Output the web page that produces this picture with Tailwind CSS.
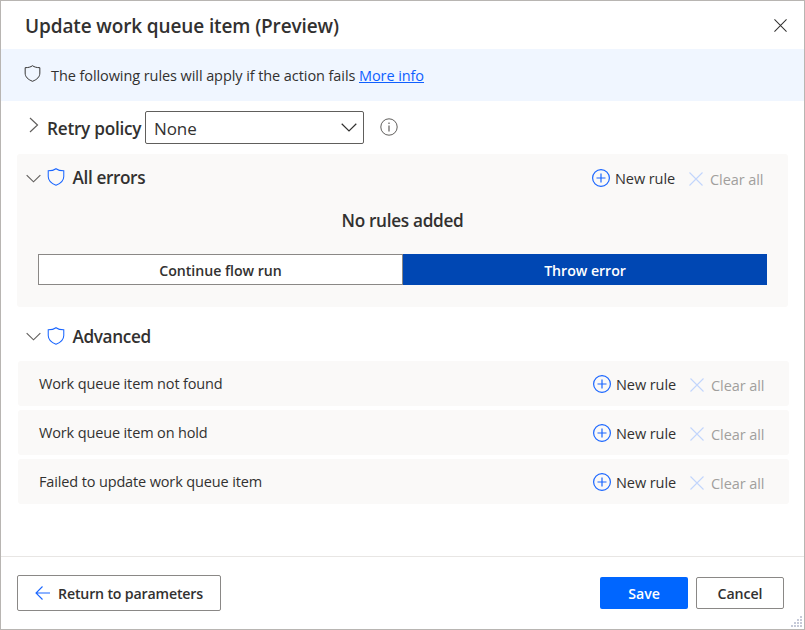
<!DOCTYPE html>
<html lang="en">
<head>
<meta charset="utf-8">
<title>Update work queue item (Preview)</title>
<script src="https://cdn.jsdelivr.net/npm/@tailwindcss/browser@4"></script>
</head>
<body class="overflow-hidden">
<svg class="hidden">
  <symbol id="shield" viewBox="0 0 18 19"><path d="M9 .8C11 2.300 13.800 3 17.200 3v6c0 4.200-3 7.200-8.200 9.200C3.800 16.200.8 13.200.8 9V3C4.200 3 7 2.300 9 .8Z" fill="none" stroke="currentColor" stroke-width="1.100"/></symbol>
  <symbol id="down" viewBox="0 0 16 9"><path d="M.7.8 8 8 15.300.8" fill="none" stroke="currentColor" stroke-width="1.200"/></symbol>
  <symbol id="plus" viewBox="0 0 18 18"><circle cx="9" cy="9" r="8.400" fill="none" stroke="currentColor" stroke-width="1.200"/><path d="M9 4.500v9M4.500 9h9" fill="none" stroke="currentColor" stroke-width="1.200"/></symbol>
  <symbol id="cross" viewBox="0 0 14 14"><path d="m.5.5 13 13M13.500.5l-13 13" fill="none" stroke="currentColor" stroke-width="1.100"/></symbol>
</svg>
<div class="w-[805px] h-[630px] flex flex-col bg-white border border-[#b8b5b2] relative font-['Open_Sans','Noto_Sans',sans-serif] text-[#323130] text-[14.5px] tracking-[-0.08px] leading-5 whitespace-nowrap">
  <header class="h-12 flex items-center justify-between pl-6 pr-[17px] pt-0.5">
    <h1 class="text-[19px] tracking-[-0.12px] leading-6 font-semibold">Update work queue item (Preview)</h1>
    <svg class="w-[13px] h-[13px] mb-px"><use href="#cross"/></svg>
  </header>
  <div class="h-[52px] bg-[#f0f6ff] flex items-center pl-[23px]">
    <svg class="w-[17px] h-[17px] mr-[10px] mb-[3px]"><use href="#shield"/></svg>
    <p class="pt-px">The following rules will apply if the action fails <a class="text-[#0f5fff] underline">More info</a></p>
  </div>
  <main class="grow pl-4 pt-[10px]">
    <div class="h-[33px] flex items-center">
      <svg class="w-[10px] h-4 ml-3 mr-2 mb-1.5" viewBox="0 0 10 16"><path d="M1 1l7.500 7L1 15" fill="none" stroke="#605e5c" stroke-width="1.200"/></svg>
      <div class="w-[98px] text-[17.2px] tracking-[-0.25px] font-semibold pt-0.5">Retry policy</div>
      <div class="w-[219px] h-[33px] border border-[#605e5c] rounded-[2px] flex items-center justify-between pl-2 pr-[6px] text-[17px]"><span class="pt-0.5">None</span><svg class="w-4 h-[9px]"><use href="#down"/></svg></div>
      <svg class="w-[18px] h-[18px] ml-4 mb-0.5" viewBox="0 0 18 18" fill="none" stroke="#605e5c"><circle cx="9" cy="9" r="8.200"/><path d="M9 7.500v6M9 4.500v1.500" stroke-width="1.200"/></svg>
    </div>
    <section class="mt-[10px] w-[771px] h-[153px] rounded-[3px] bg-[#faf9f8]">
      <div class="h-12 flex items-center pl-[9px]">
        <svg class="w-[15px] h-[9px] mr-[6px] text-[#605e5c]"><use href="#down"/></svg>
        <svg class="w-[18px] h-[18px] mr-[7.500px] mb-0.5 text-[#1a66ff]"><use href="#shield"/></svg>
        <div class="text-[17.2px] tracking-[-0.38px] font-semibold w-[519.500px]">All errors</div>
        <svg class="w-[18px] h-[18px] mr-[5px] text-[#1a66ff]"><use href="#plus"/></svg>
        <div class="w-[74px] pt-px">New rule</div>
        <svg class="w-[14px] h-[14px] mr-[7px] mt-0.5 text-[#c2d5fc]"><use href="#cross"/></svg>
        <div class="pt-[3px] text-[#a19f9d]">Clear all</div>
      </div>
      <div class="text-center text-[17.2px] tracking-[-0.3px] leading-6 font-semibold pt-[7px]">No rules added</div>
      <div class="mt-[21px] mx-[21px] h-[31px] flex font-semibold text-center text-[14.2px] tracking-[-0.05px]">
        <div class="w-[365px] bg-white border border-[#8a8886] leading-[31px]">Continue flow run</div>
        <div class="grow bg-[#0047b3] text-white leading-[33px]">Throw error</div>
      </div>
    </section>
    <div class="h-[54px] flex items-center pl-[9px] pt-1">
      <svg class="w-[15px] h-[9px] mr-[6px] text-[#605e5c]"><use href="#down"/></svg>
      <svg class="w-[18px] h-[18px] mr-[7.500px] text-[#1a66ff]"><use href="#shield"/></svg>
      <div class="text-[17.2px] tracking-[-0.38px] font-semibold pt-px">Advanced</div>
    </div>
    <div class="grid gap-1 w-[771px] ml-px" id="rows"></div>
  </main>
  <footer class="h-[73px] border-t border-[#e8e6e4] flex items-center pl-4 pr-5 font-semibold text-[14.2px]">
    <button class="w-[204px] h-9 border border-[#8a8886] rounded-[2px] flex items-center pl-[17px] mr-auto tracking-[-0.18px]"><svg class="w-[15px] h-[14px] mr-2" viewBox="0 0 15 14"><path d="M15 7H.8M7.500.5 1 7l6.500 6.500" fill="none" stroke="#1a66ff" stroke-width="1.100"/></svg><span class="pt-px">Return to parameters</span></button>
    <button class="w-[88px] h-8 bg-[#0066ff] text-white rounded-[2px] mr-2 pt-0.5">Save</button>
    <button class="w-[88px] h-8 border border-[#8a8886] rounded-[2px] pt-px">Cancel</button>
  </footer>
  <svg class="absolute right-[2px] bottom-[2px] w-[11px] h-[11px]" viewBox="0 0 11 11" fill="#c6cad8"><path d="M9 0h2v2H9zM9 3h2v2H9zM9 6h2v2H9zM9 9h2v2H9zM6 3h2v2H6zM6 6h2v2H6zM6 9h2v2H6zM3 6h2v2H3zM3 9h2v2H3zM0 9h2v2H0z"/></svg>
</div>
<script>
document.getElementById('rows').innerHTML = ['Work queue item not found','Work queue item on hold','Failed to update work queue item'].map(t => `
<div class="h-[45px] rounded-[3px] bg-[#faf9f8] flex items-center pl-[21px]">
  <div class="w-[553px] tracking-[-0.14px]">${t}</div>
  <svg class="w-[18px] h-[18px] ml-px mr-[5px] text-[#1a66ff]"><use href="#plus"/></svg>
  <div class="w-[74px] pt-0.5">New rule</div>
  <svg class="w-[14px] h-[14px] mr-[7px] mt-0.5 text-[#c2d5fc]"><use href="#cross"/></svg>
  <div class="pt-1 text-[#a19f9d]">Clear all</div>
</div>`).join('');
</script>
</body>
</html>
